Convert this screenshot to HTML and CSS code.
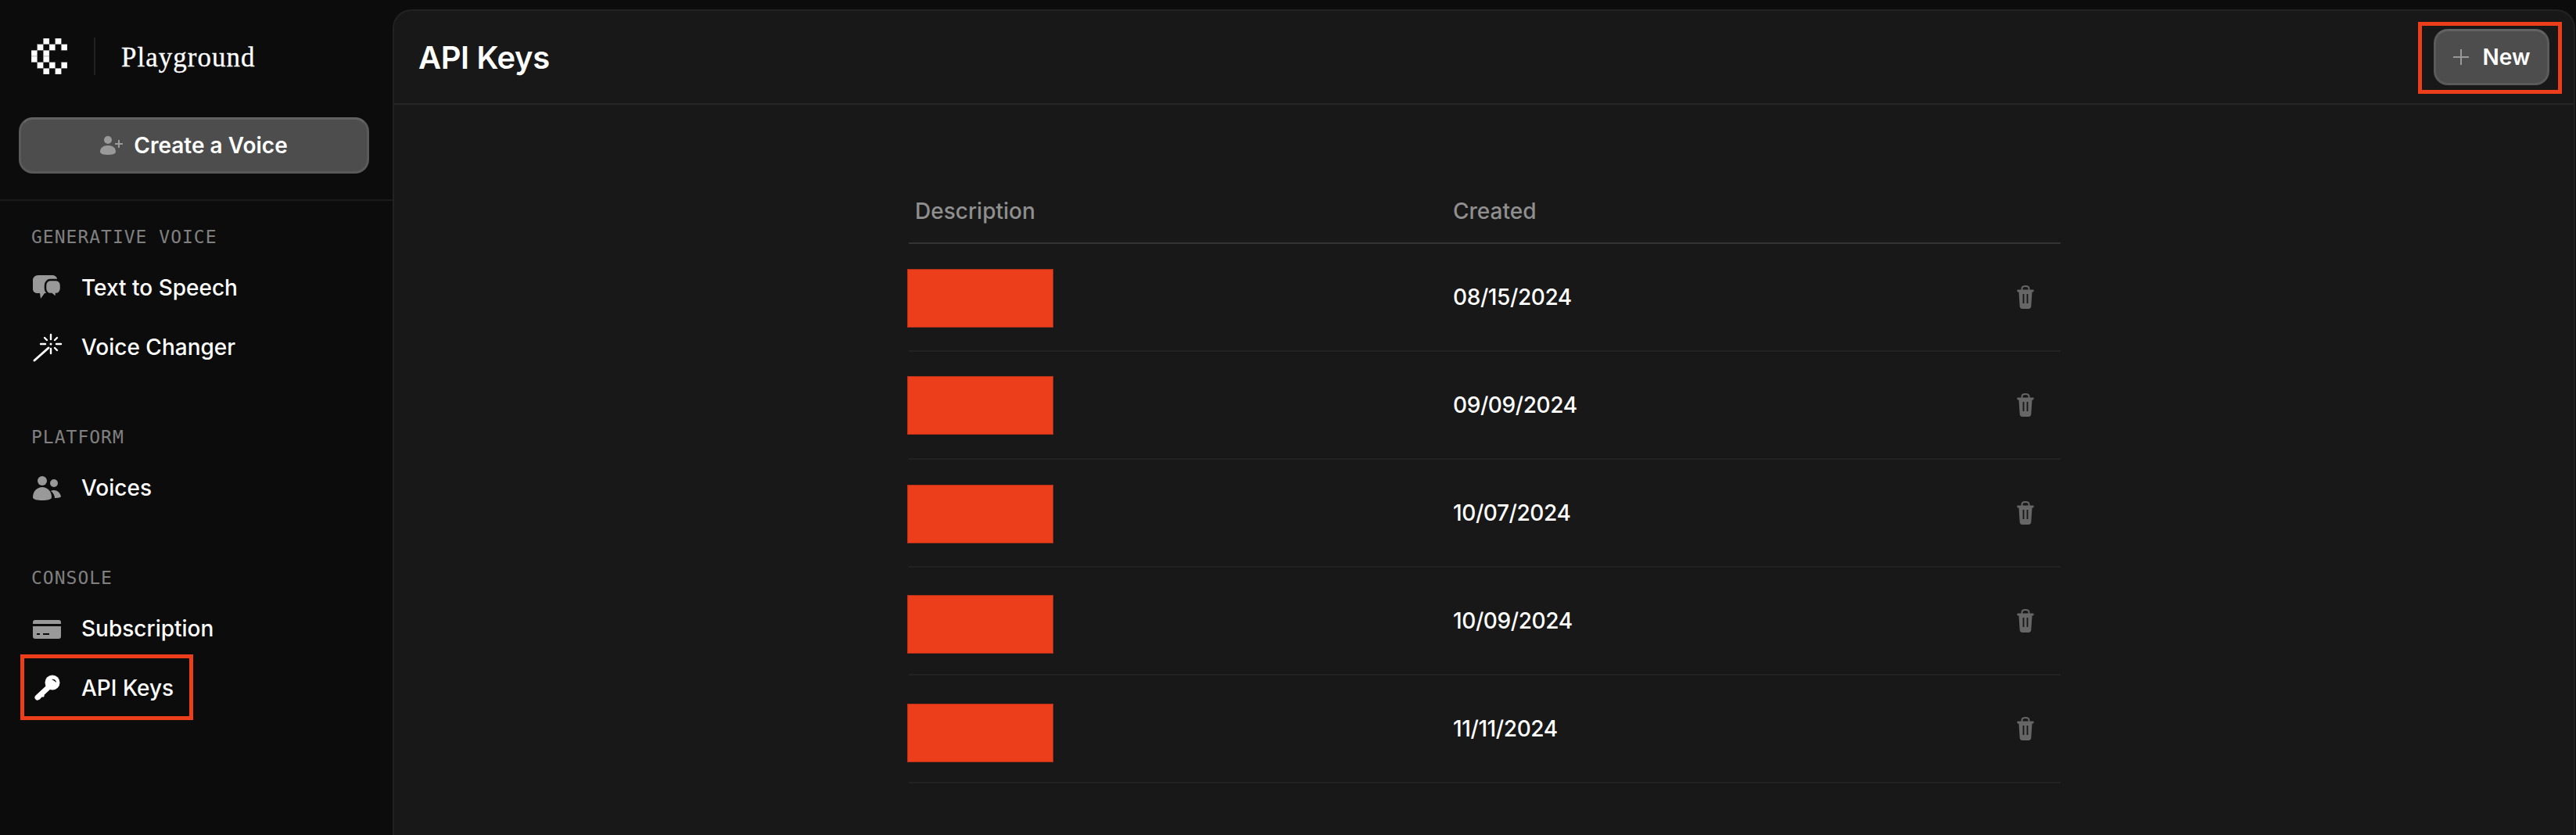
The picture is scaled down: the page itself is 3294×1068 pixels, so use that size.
FILE: index.html
```html
<!DOCTYPE html>
<html lang="en">
<head>
<meta charset="utf-8">
<title>API Keys</title>
<link rel="stylesheet" href="styles.css">
</head>
<body>
<div class="app">
  <aside class="sidebar">
    <div class="brand">
      <svg class="logo" viewBox="0 0 6 6" aria-hidden="true">
        <g fill="#fff" stroke="#777" stroke-width="0.05">
          <rect x="2" y="0" width="1" height="1"/><rect x="4" y="0" width="1" height="1"/>
          <rect x="1" y="1" width="1" height="1"/><rect x="3" y="1" width="1" height="1"/><rect x="5" y="1" width="1" height="1"/>
          <rect x="0" y="2" width="1" height="1"/><rect x="2" y="2" width="1" height="1"/>
          <rect x="0" y="3" width="1" height="1"/><rect x="2" y="3" width="1" height="1"/>
          <rect x="1" y="4" width="1" height="1"/><rect x="3" y="4" width="1" height="1"/><rect x="5" y="4" width="1" height="1"/>
          <rect x="2" y="5" width="1" height="1"/><rect x="4" y="5" width="1" height="1"/>
        </g>
      </svg>
      <span class="brand-sep"></span>
      <span class="brand-name">Playground</span>
    </div>
    <div class="create-wrap">
      <button class="btn btn-create" type="button">
        <svg class="btn-icon-user" viewBox="0 0 30 26" aria-hidden="true">
          <circle cx="10" cy="6" r="5" fill="#999"/>
          <path d="M0 21c0-5 4-8 10-8s10 3 10 8c0 3-5 4-10 4S0 24 0 21z" fill="#999"/>
          <path d="M19 11h10M24 6v10" stroke="#999" stroke-width="2" fill="none"/>
        </svg>
        Create a Voice
      </button>
    </div>
    <nav class="nav">
      <section class="nav-group">
        <h2 class="nav-label">GENERATIVE VOICE</h2>
        <a class="nav-item">
          <svg class="nav-icon" viewBox="0 0 40 40" aria-hidden="true">
            <path d="M9 4h17c4 0 7 2 7 5v14c0 3-3 4-7 4H17l-5 7-1-7H8c-3 0-6-2-6-5V10c0-3 3-6 7-6z" fill="#999"/>
            <path d="M24 10h8c3 0 6 3 6 7v4c0 4-3 7-6 7l0 5-6-5h-2c-3 0-6-3-6-7v-4c0-4 3-7 6-7z" fill="#999" stroke="#0c0c0c" stroke-width="2.5"/>
          </svg>
          Text to Speech
        </a>
        <a class="nav-item">
          <svg class="nav-icon" viewBox="0 0 40 40" aria-hidden="true">
            <path d="M4 37 22 21" stroke="#fff" stroke-width="3" stroke-linecap="round" fill="none"/>
            <path d="M25 4v6M25 22v6M12 16h6M32 16h6M17 8l3 3M33 8l-3 3M33 24l-3-3" stroke="#fff" stroke-width="2.4" stroke-linecap="round" fill="none"/>
            <circle cx="25" cy="16" r="1.5" fill="#fff"/>
          </svg>
          Voice Changer
        </a>
      </section>
      <section class="nav-group">
        <h2 class="nav-label">PLATFORM</h2>
        <a class="nav-item">
          <svg class="nav-icon" viewBox="0 0 40 40" aria-hidden="true">
            <circle cx="14" cy="11" r="6" fill="#999"/>
            <circle cx="29" cy="14" r="5" fill="#999"/>
            <path d="M2 32c0-8 6-13 12-13s12 5 12 13c0 3-6 4-12 4S2 35 2 32z" fill="#999"/>
            <path d="M25 24c1-1 3-1 4-1 5 0 8 4 9 8 0 1-3 2-8 2 0-3-2-7-5-9z" fill="#999"/>
          </svg>
          Voices
        </a>
      </section>
      <section class="nav-group">
        <h2 class="nav-label">CONSOLE</h2>
        <a class="nav-item">
          <svg class="nav-icon" viewBox="0 0 40 40" aria-hidden="true">
            <path d="M2 14v-2c0-2 1-3 3-3h30c2 0 3 1 3 3v2z" fill="#999"/>
            <path d="M2 17h36v13c0 2-1 3-3 3H5c-2 0-3-1-3-3z" fill="#999"/>
            <path d="M7 27h4M15 27h8" stroke="#0c0c0c" stroke-width="2" fill="none"/>
          </svg>
          Subscription
        </a>
        <a class="nav-item nav-item-marked">
          <svg class="nav-icon" viewBox="0 0 40 40" aria-hidden="true">
            <circle cx="27" cy="13" r="9.5" fill="#fff"/>
            <path d="M22 19 8 32" stroke="#fff" stroke-width="7" stroke-linecap="round" fill="none"/>
            <path d="M12 27l4 4M8 31l3 3" stroke="#fff" stroke-width="3" fill="none"/>
            <path d="M26 9c3-1 6 1 6 4-2-2-4-3-6-4z" fill="#0c0c0c"/>
          </svg>
          API Keys
        </a>
      </section>
    </nav>
  </aside>
  <main class="panel">
    <header class="panel-head">
      <h1 class="title">API Keys</h1>
      <div class="new-wrap">
        <button class="btn btn-new" type="button">
          <svg class="btn-icon-plus" viewBox="0 0 20 20" aria-hidden="true">
            <path d="M0 10h20M10 0v20" stroke="#999" stroke-width="2" fill="none"/>
          </svg>
          New
        </button>
      </div>
    </header>
    <div class="content">
      <div class="table">
        <div class="row row-head">
          <span class="cell-desc">Description</span>
          <span>Created</span>
          <span></span>
        </div>
        <div class="row">
          <span class="redact"></span>
          <span class="date">08/15/2024</span>
          <svg class="trash" viewBox="0 0 22 30" aria-hidden="true"><path d="M6.5 6V4c0-2 2-3 4.500-3s4.500 1 4.500 3v2" stroke="#666" stroke-width="2" fill="none"/><path d="M1 5.500h20c1 0 1 3-.5 3H1.500C0 8.500 0 5.500 1 5.500zM2.500 8.500h17l-1.200 18c-.1 2-1.300 3.500-3.300 3.500H7c-2 0-3.200-1.500-3.300-3.500z" fill="#666"/><path d="M8.500 11v12M13.500 11v12" stroke="#181818" stroke-width="1.800" fill="none"/></svg>
        </div>
        <div class="row">
          <span class="redact"></span>
          <span class="date">09/09/2024</span>
          <svg class="trash" viewBox="0 0 22 30" aria-hidden="true"><path d="M6.5 6V4c0-2 2-3 4.500-3s4.500 1 4.500 3v2" stroke="#666" stroke-width="2" fill="none"/><path d="M1 5.500h20c1 0 1 3-.5 3H1.500C0 8.500 0 5.500 1 5.500zM2.500 8.500h17l-1.200 18c-.1 2-1.300 3.500-3.300 3.500H7c-2 0-3.200-1.500-3.300-3.500z" fill="#666"/><path d="M8.500 11v12M13.500 11v12" stroke="#181818" stroke-width="1.800" fill="none"/></svg>
        </div>
        <div class="row">
          <span class="redact"></span>
          <span class="date">10/07/2024</span>
          <svg class="trash" viewBox="0 0 22 30" aria-hidden="true"><path d="M6.5 6V4c0-2 2-3 4.500-3s4.500 1 4.500 3v2" stroke="#666" stroke-width="2" fill="none"/><path d="M1 5.500h20c1 0 1 3-.5 3H1.500C0 8.500 0 5.500 1 5.500zM2.500 8.500h17l-1.200 18c-.1 2-1.300 3.500-3.300 3.500H7c-2 0-3.200-1.500-3.300-3.500z" fill="#666"/><path d="M8.500 11v12M13.500 11v12" stroke="#181818" stroke-width="1.800" fill="none"/></svg>
        </div>
        <div class="row">
          <span class="redact"></span>
          <span class="date">10/09/2024</span>
          <svg class="trash" viewBox="0 0 22 30" aria-hidden="true"><path d="M6.5 6V4c0-2 2-3 4.500-3s4.500 1 4.500 3v2" stroke="#666" stroke-width="2" fill="none"/><path d="M1 5.500h20c1 0 1 3-.5 3H1.500C0 8.500 0 5.500 1 5.500zM2.500 8.500h17l-1.200 18c-.1 2-1.300 3.500-3.300 3.500H7c-2 0-3.200-1.500-3.300-3.500z" fill="#666"/><path d="M8.500 11v12M13.500 11v12" stroke="#181818" stroke-width="1.800" fill="none"/></svg>
        </div>
        <div class="row">
          <span class="redact"></span>
          <span class="date">11/11/2024</span>
          <svg class="trash" viewBox="0 0 22 30" aria-hidden="true"><path d="M6.5 6V4c0-2 2-3 4.500-3s4.500 1 4.500 3v2" stroke="#666" stroke-width="2" fill="none"/><path d="M1 5.500h20c1 0 1 3-.5 3H1.500C0 8.500 0 5.500 1 5.500zM2.500 8.500h17l-1.200 18c-.1 2-1.300 3.500-3.300 3.500H7c-2 0-3.200-1.500-3.300-3.500z" fill="#666"/><path d="M8.500 11v12M13.500 11v12" stroke="#181818" stroke-width="1.800" fill="none"/></svg>
        </div>
      </div>
    </div>
  </main>
</div>
</body>
</html>
```
FILE: styles.css
```css
*, *::before, *::after { box-sizing: border-box; }
html, body { margin: 0; height: 100%; overflow: hidden; }
body {
  background: #0c0c0c;
  color: #fff;
  font-family: Inter, "Liberation Sans", sans-serif;
}
.app { display: flex; height: 1068px; }

.sidebar { width: 502px; flex: none; }
.brand { display: flex; align-items: center; height: 144px; padding-left: 40px; }
.logo { width: 46px; height: 46px; display: block; }
.brand-sep { width: 2px; height: 48px; background: #222; margin-left: 34px; }
.brand-name {
  margin-left: 33px;
  padding-top: 3px;
  font-family: "Liberation Serif", serif;
  font-size: 35px;
  letter-spacing: 1px;
  -webkit-text-stroke: 0.3px #fff;
  color: #fff;
}
.create-wrap { padding: 6px 30px 33px 24px; border-bottom: 2px solid #1c1c1c; }
.btn {
  display: flex;
  align-items: center;
  justify-content: center;
  background: #4d4d4d;
  border: 3px solid #5a5a5a;
  border-top-color: #636363;
  border-radius: 18px;
  color: #fff;
  font-family: inherit;
  font-size: 28px;
  font-weight: 600;
}
.btn-create { width: 448px; height: 72px; }
.btn-icon-user { width: 30px; height: 26px; margin-right: 13px; }

.nav { padding-top: 27px; }
.nav-group { margin-bottom: 58px; }
.nav-label {
  margin: 0 0 6px;
  height: 40px;
  line-height: 38px;
  padding-left: 40px;
  font-family: "DejaVu Sans Mono", monospace;
  font-size: 23px;
  font-weight: 400;
  letter-spacing: 1px;
  color: #808080;
}
.nav-item {
  position: relative;
  display: flex;
  align-items: center;
  height: 76px;
  padding-left: 40px;
  font-size: 28px;
  font-weight: 500;
  color: #fff;
}
.nav-icon { width: 40px; height: 40px; margin-right: 24px; flex: none; }
.nav-item-marked::after {
  content: "";
  position: absolute;
  left: 26px;
  top: -5px;
  width: 221px;
  height: 84px;
  border: 5px solid #ec3e1a;
}

.panel {
  flex: 1;
  margin: 12px 1px 0 0;
  background: #181818;
  border: 2px solid #222;
  border-bottom: 0;
  border-radius: 24px 24px 0 0;
  display: flex;
  flex-direction: column;
}
.panel-head {
  display: flex;
  align-items: center;
  justify-content: space-between;
  height: 120px;
  flex: none;
  padding: 0 31px 0 31px;
  border-bottom: 2px solid #262626;
}
.title { margin: 0; font-size: 40px; font-weight: 600; letter-spacing: -0.4px; }
.new-wrap { position: relative; }
.new-wrap::after {
  content: "";
  position: absolute;
  left: -20px;
  top: -9px;
  width: 184px;
  height: 92px;
  border: 5px solid #ec3e1a;
}
.btn-new { width: 148px; height: 72px; }
.btn-icon-plus { width: 20px; height: 20px; margin-right: 18px; }

.content { padding: 96px 0 0 2px; }
.table { width: 1473px; margin: 0 auto; }
.row {
  display: grid;
  grid-template-columns: 696px 1fr 90px;
  align-items: center;
  height: 138px;
  border-bottom: 2px solid #222;
}
.row-head {
  height: 82px;
  border-bottom-color: #333;
  font-size: 28px;
  font-weight: 500;
  color: #8f8f8f;
}
.cell-desc { padding-left: 8px; }
.redact {
  display: block;
  align-self: start;
  width: 187px;
  height: 75px;
  margin-left: -2px;
  background: #ec3e1a;
  border: 1px solid #b0301a;
}
.row:nth-child(2) .redact { margin-top: 32px; }
.row:nth-child(3) .redact { margin-top: 31px; }
.row:nth-child(4) .redact { margin-top: 32px; }
.row:nth-child(5) .redact { margin-top: 35px; }
.row:nth-child(6) .redact { margin-top: 36px; }
.date { font-size: 28px; font-weight: 500; color: #fff; letter-spacing: -0.4px; }
.trash { width: 22px; height: 30px; justify-self: center; }
```
